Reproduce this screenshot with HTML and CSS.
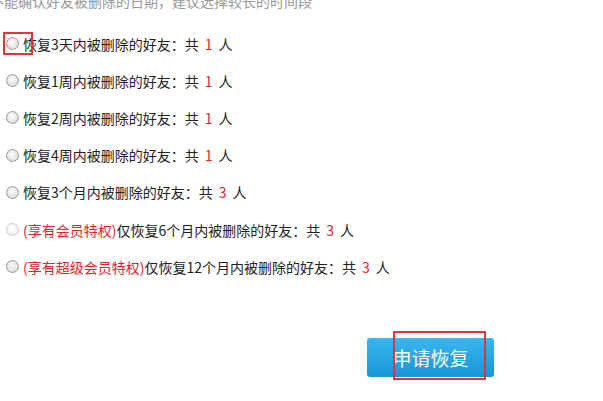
FILE: index.html
```html
<!DOCTYPE html>
<html lang="zh">
<head>
<meta charset="utf-8">
<link rel="stylesheet" href="styles.css">
</head>
<body>
<div class="page">
  <p class="hint">不能确认好友被删除的日期，建议选择较长的时间段</p>
  <ul class="options">
    <li class="opt"><span class="radio"></span><span class="label">恢复3天内被删除的好友：共<em class="num">1</em>人</span></li>
    <li class="opt"><span class="radio"></span><span class="label">恢复1周内被删除的好友：共<em class="num">1</em>人</span></li>
    <li class="opt"><span class="radio"></span><span class="label">恢复2周内被删除的好友：共<em class="num">1</em>人</span></li>
    <li class="opt"><span class="radio"></span><span class="label">恢复4周内被删除的好友：共<em class="num">1</em>人</span></li>
    <li class="opt"><span class="radio"></span><span class="label">恢复3个月内被删除的好友：共<em class="num">3</em>人</span></li>
    <li class="opt"><span class="radio disabled"></span><span class="label"><em>(享有会员特权)</em>仅恢复6个月内被删除的好友：共<em class="num">3</em>人</span></li>
    <li class="opt"><span class="radio"></span><span class="label"><em>(享有超级会员特权)</em>仅恢复12个月内被删除的好友：共<em class="num">3</em>人</span></li>
  </ul>
  <div class="actions">
    <button class="submit">申请恢复</button>
  </div>
  <div class="mark mark-radio"></div>
  <div class="mark mark-btn"></div>
</div>
</body>
</html>
```
FILE: styles.css
```css
html, body {
  margin: 0;
  padding: 0;
  background: #fff;
}
.page {
  position: relative;
  width: 603px;
  height: 401px;
  overflow: hidden;
  font-family: "Noto Sans CJK SC", "Microsoft YaHei", sans-serif;
  font-size: 14px;
  color: #222;
}
.hint {
  margin: -9px 0 0 -10px;
  height: 20px;
  line-height: 20px;
  color: #999;
  font-size: 14px;
  white-space: nowrap;
}
.options {
  list-style: none;
  margin: 14px 0 0 0;
  padding: 0;
}
.opt {
  display: flex;
  align-items: center;
  height: 37.2px;
  padding-left: 6px;
  white-space: nowrap;
}
.radio {
  width: 11px;
  height: 11px;
  border: 1px solid #9a9a9a;
  border-radius: 50%;
  background: radial-gradient(circle at 45% 40%, #fbfbfb 0%, #e6e6e6 55%, #cfcfcf 100%);
  margin-right: 4px;
  flex: none;
}
.radio.disabled {
  border-color: #cfcfcf;
  background: radial-gradient(circle at 45% 40%, #ffffff 0%, #f2f2f2 60%, #e4e4e4 100%);
}
.label em {
  font-style: normal;
  color: #e3232b;
}
.label .num {
  padding: 0 6px;
}
.actions {
  margin-top: 53px;
  padding-left: 367px;
}
.submit {
  width: 127px;
  height: 39px;
  border: none;
  border-radius: 3px;
  background: linear-gradient(#3ab6ee, #1897d6);
  color: #fff;
  font-family: "Noto Sans CJK SC", "Microsoft YaHei", sans-serif;
  font-size: 19px;
  padding: 0;
  cursor: pointer;
  display: block;
}
.mark {
  position: absolute;
  border: 2px solid #e3343a;
  box-sizing: border-box;
}
.mark-radio {
  left: 3px;
  top: 32px;
  width: 30px;
  height: 23px;
}
.mark-btn {
  left: 393px;
  top: 331px;
  width: 93px;
  height: 49px;
}
```
